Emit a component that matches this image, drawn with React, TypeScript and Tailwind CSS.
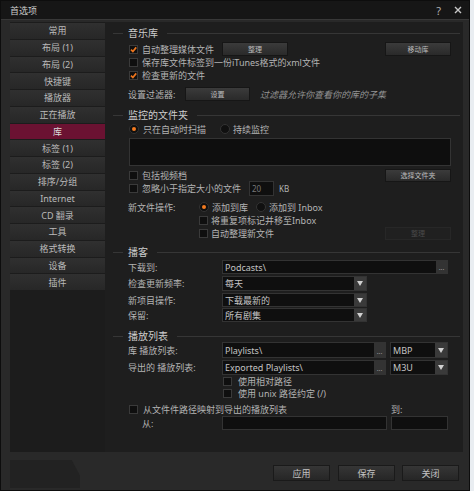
import React from "react";

type P = { children?: React.ReactNode; className?: string };

function Cb({ on, className = "" }: { on?: boolean; className?: string }) {
  return (
    <span className={`w-[9px] h-[9px] shrink-0 bg-[#0f0f0f] border border-[#3a3a3a] flex items-center justify-center ${className}`}>
      {on && (
        <svg width="7" height="7" viewBox="0 0 7 7">
          <path d="M1 3.6 L2.9 5.5 L6.2 1.4" stroke="#ec751e" strokeWidth="1.7" fill="none" />
        </svg>
      )}
    </span>
  );
}

function Rd({ on, className = "" }: { on?: boolean; className?: string }) {
  return (
    <span className={`w-[10px] h-[10px] shrink-0 rounded-full bg-[#101010] border border-[#333] flex items-center justify-center ${className}`}>
      {on && <span className="w-[4px] h-[4px] rounded-full bg-[#f27a1f]" />}
    </span>
  );
}

function Btn({ children, className = "", disabled }: P & { disabled?: boolean }) {
  return (
    <div
      className={`shrink-0 flex items-center justify-center text-[7px] leading-none border ${
        disabled
          ? "bg-[#202020] border-[#272727] text-[#4a4a4a]"
          : "bg-linear-to-b from-[#3b3b3b] to-[#2a2a2a] border-[#161616] text-[#bdbdbd]"
      } ${className}`}
    >
      {children}
    </div>
  );
}

function Heading({ t, className = "" }: { t: string; className?: string }) {
  return (
    <div className={`-ml-[15px] -mr-[9px] h-[12px] flex items-center ${className}`}>
      <div className="w-[10px] h-px bg-[#363636]" />
      <span className="ml-[5px] text-[10px] leading-none text-[#cdcdcd] whitespace-nowrap">{t}</span>
      <div className="flex-1 h-px bg-[#363636] ml-[9px]" />
    </div>
  );
}

function Arrow() {
  return (
    <div className="w-[12px] self-stretch bg-[#3a3a3a] flex items-center justify-center shrink-0">
      <svg width="6" height="5" viewBox="0 0 6 5">
        <path d="M0 0 H6 L3 5 Z" fill="#d0d0d0" />
      </svg>
    </div>
  );
}

function Dots() {
  return (
    <div className="w-[11px] self-stretch bg-[#333] flex items-end justify-center pb-[2px] shrink-0 text-[7px] leading-none text-[#949494]">
      ...
    </div>
  );
}

function Field({ children, className = "", dots, arrow }: P & { dots?: boolean; arrow?: boolean }) {
  return (
    <div className={`shrink-0 bg-[#0f0f0f] border border-[#333] flex items-stretch ${className}`}>
      <div className="flex-1 flex items-center pl-[2px] text-[9px] leading-none text-[#c4c4c4] whitespace-nowrap overflow-hidden">
        {children}
      </div>
      {dots && <Dots />}
      {arrow && <Arrow />}
    </div>
  );
}

const side = [
  "常用",
  "布局 (1)",
  "布局 (2)",
  "快捷键",
  "播放器",
  "正在播放",
  "库",
  "标签 (1)",
  "标签 (2)",
  "排序/分组",
  "Internet",
  "CD 翻录",
  "工具",
  "格式转换",
  "设备",
  "插件",
];

export default function App() {
  return (
    <div className="w-[474px] h-[491px] bg-[#e9edf1] [font-family:'Noto_Sans','Noto_Sans_CJK_SC',sans-serif]">
      <div className="w-[470px] h-[491px] bg-[#292929] border border-[#0d0d0d] flex flex-col">
        {/* title bar */}
        <div className="h-[19px] bg-[#161616] border-b border-[#383838] flex items-center pl-[9px] pr-[7px] shrink-0">
          <span className="text-[9px] leading-none text-[#cccccc]">首选项</span>
          <div className="flex-1" />
          <span className="text-[11px] leading-none text-[#b0b0b0] mr-[13px]">?</span>
          <svg width="8" height="8" viewBox="0 0 8 8">
            <path d="M1 1 L7 7 M7 1 L1 7" stroke="#c8c8c8" strokeWidth="1.4" />
          </svg>
        </div>

        {/* panels */}
        <div className="h-[432px] pt-[2px] pl-[9px] pr-[6px] flex shrink-0">
          {/* sidebar */}
          <div className="w-[95px] bg-[#1c1c1c] pt-[1px] flex flex-col gap-[1px]">
            {side.map((s) => (
              <div
                key={s}
                className={`h-[15.75px] flex items-center justify-center text-[9px] leading-none ${
                  s === "库"
                    ? "bg-[#6b1232] text-[#dadada]"
                    : "bg-linear-to-b from-[#303030] to-[#272727] text-[#bababa]"
                }`}
              >
                {s}
              </div>
            ))}
          </div>

          {/* content */}
          <div className="flex-1 bg-[#1e1e1e] flex flex-col pl-[23px] pr-[12px] pt-[5px] text-[9px] leading-none text-[#b4b4b4] whitespace-nowrap">
            <Heading t="音乐库" />
            <div className="mt-[3px] h-[14px] flex items-center">
              <div className="w-[94px] flex items-center">
                <Cb on className="ml-[1px]" />
                <span className="ml-[4px]">自动整理媒体文件</span>
              </div>
              <Btn className="w-[66px] h-[14px]">整理</Btn>
              <div className="flex-1" />
              <Btn className="w-[66px] h-[14px]">移动库</Btn>
            </div>
            <div className="h-[13px] flex items-center">
              <Cb className="ml-[1px]" />
              <span className="ml-[4px]">保存库文件标签到一份iTunes格式的xml文件</span>
            </div>
            <div className="h-[13px] flex items-center">
              <Cb on className="ml-[1px]" />
              <span className="ml-[4px]">检查更新的文件</span>
            </div>
            <div className="mt-[5px] h-[14px] flex items-center">
              <span className="w-[57px]">设置过滤器:</span>
              <Btn className="w-[65px] h-[14px]">设置</Btn>
              <span className="ml-[10px] italic text-[#949494]">过滤器允许你查看你的库的子集</span>
            </div>

            <Heading t="监控的文件夹" className="mt-[8px]" />
            <div className="mt-[2px] h-[12px] flex items-center">
              <div className="w-[92px] flex items-center">
                <Rd on className="ml-[1px]" />
                <span className="ml-[4px]">只在自动时扫描</span>
              </div>
              <Rd />
              <span className="ml-[3px]">持续监控</span>
            </div>
            <div className="mt-[3px] ml-[1px] h-[28px] bg-[#0e0e0e] border border-[#333]" />
            <div className="mt-[3px] h-[12px] flex items-start">
              <div className="h-[12px] flex items-center">
                <Cb className="ml-[1px]" />
                <span className="ml-[4px]">包括视频档</span>
              </div>
              <div className="flex-1" />
              <Btn className="w-[66px] h-[13px]">选择文件夹</Btn>
            </div>
            <div className="h-[15px] flex items-center">
              <div className="w-[121px] flex items-center">
                <Cb className="ml-[1px]" />
                <span className="ml-[4px]">忽略小于指定大小的文件</span>
              </div>
              <div className="w-[25px] h-[15px] bg-[#0f0f0f] border border-[#333] flex items-center pl-[2px] text-[8px] text-[#777]">
                20
              </div>
              <span className="ml-[5px] text-[8px]">KB</span>
            </div>
            <div className="mt-[4px] h-[14px] flex items-center">
              <span className="w-[71px]">新文件操作:</span>
              <div className="w-[57px] flex items-center">
                <Rd on />
                <span className="ml-[3px]">添加到库</span>
              </div>
              <Rd />
              <span className="ml-[3px]">添加到 Inbox</span>
            </div>
            <div className="h-[13px] flex items-center">
              <Cb className="ml-[71px]" />
              <span className="ml-[3px]">将重复项标记并移至Inbox</span>
            </div>
            <div className="h-[13px] flex items-center">
              <Cb className="ml-[71px]" />
              <span className="ml-[3px]">自动整理新文件</span>
              <div className="flex-1" />
              <Btn disabled className="w-[66px] h-[13px]">整理</Btn>
            </div>

            <Heading t="播客" className="mt-[6px]" />
            <div className="mt-[2px] h-[14px] flex items-center">
              <span className="w-[94px]">下载到:</span>
              <Field dots className="flex-1 h-[14px] mr-[3px]">Podcasts\</Field>
            </div>
            <div className="mt-[2px] h-[15px] flex items-center">
              <span className="w-[94px]">检查更新频率:</span>
              <Field arrow className="w-[145px] h-[15px]">每天</Field>
            </div>
            <div className="mt-[2px] h-[14px] flex items-center">
              <span className="w-[94px]">新项目操作:</span>
              <Field arrow className="w-[145px] h-[14px]">下载最新的</Field>
            </div>
            <div className="mt-[1px] h-[14px] flex items-center">
              <span className="w-[94px]">保留:</span>
              <Field arrow className="w-[145px] h-[14px]">所有剧集</Field>
            </div>

            <Heading t="播放列表" className="mt-[8px]" />
            <div className="h-[16px] flex items-center">
              <span className="w-[94px]">库 播放列表:</span>
              <Field dots className="w-[164px] h-[16px]">Playlists\</Field>
              <Field arrow className="ml-[4px] w-[58px] h-[16px]">MBP</Field>
            </div>
            <div className="mt-[2px] h-[15px] flex items-center">
              <span className="w-[94px]">导出的 播放列表:</span>
              <Field dots className="w-[164px] h-[15px]">Exported Playlists\</Field>
              <Field arrow className="ml-[4px] w-[58px] h-[15px]">M3U</Field>
            </div>
            <div className="mt-[1px] h-[11px] flex items-center">
              <Cb className="ml-[95px]" />
              <span className="ml-[6px]">使用相对路径</span>
            </div>
            <div className="h-[13px] flex items-center">
              <Cb className="ml-[95px]" />
              <span className="ml-[6px]">使用 unix 路径约定 (/)</span>
            </div>
            <div className="mt-[3px] h-[12px] flex items-center">
              <div className="w-[263px] flex items-center">
                <Cb className="ml-[1px]" />
                <span className="ml-[5px]">从文件件路径映射到导出的播放列表</span>
              </div>
              <span>到:</span>
            </div>
            <div className="mt-[1px] h-[14px] flex items-center">
              <span className="w-[94px] pl-[14px]">从:</span>
              <div className="w-[165px] h-[14px] bg-[#0f0f0f] border border-[#333]" />
              <div className="ml-[4px] w-[57px] h-[14px] bg-[#0f0f0f] border border-[#333]" />
            </div>
          </div>
        </div>

        {/* footer */}
        <div className="flex-1 flex pl-[9px] pr-[10px]">
          <div className="mt-[8px] w-[70px] h-[28px] bg-[#222222] [clip-path:polygon(0_0,88%_0,100%_55%,100%_100%,0_100%)]" />
          <div className="flex-1" />
          <div className="mt-[13px] flex">
            {["应用", "保存", "关闭"].map((b, i) => (
              <div
                key={b}
                className={`w-[57px] h-[16px] flex items-center justify-center text-[9px] leading-none text-[#c4c4c4] bg-linear-to-b from-[#363636] to-[#262626] border border-[#1a1a1a] ${
                  i === 1 ? "ml-[8px]" : i === 2 ? "ml-[7px]" : ""
                }`}
              >
                {b}
              </div>
            ))}
          </div>
        </div>
      </div>
    </div>
  );
}
